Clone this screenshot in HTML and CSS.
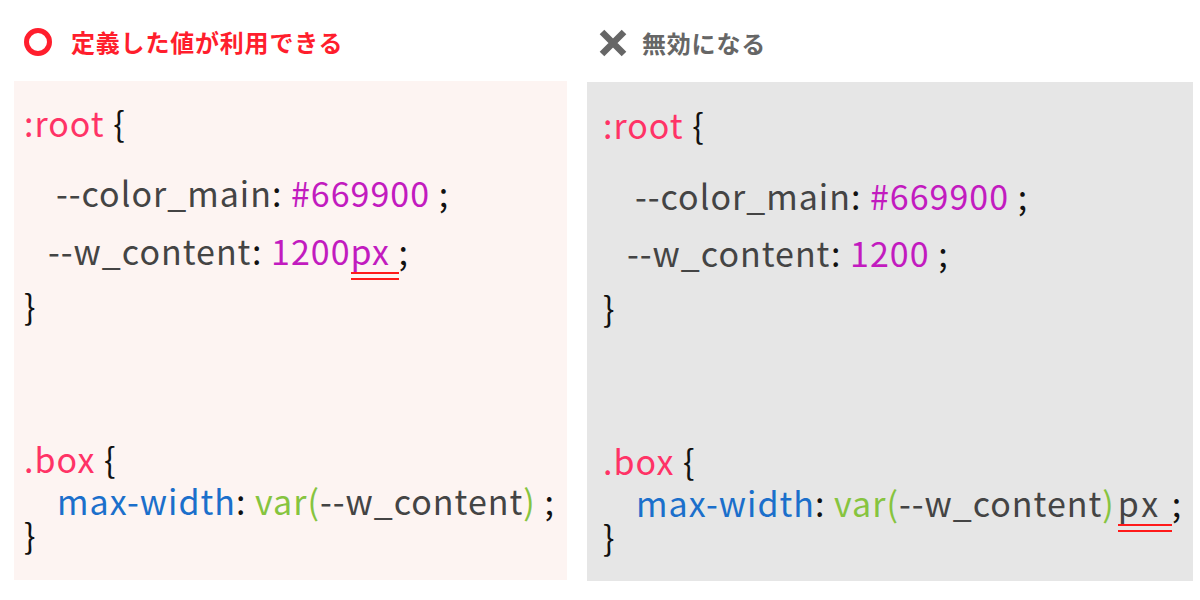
FILE: index.html
```html
<!DOCTYPE html>
<html lang="ja">
<head>
<meta charset="utf-8">
<link rel="stylesheet" href="styles.css">
</head>
<body>
<div class="page">
  <section class="col col-ok">
    <h2 class="head head-ok">
      <svg class="icon" width="30" height="30" viewBox="0 0 30 30"><circle cx="15" cy="15" r="11.5" fill="none" stroke="#ff1e2d" stroke-width="5"/></svg>
      <span>定義した値が利用できる</span>
    </h2>
    <div class="panel panel-ok">
      <div class="ln l1"><span class="sel">:root</span> {</div>
      <div class="ln l2 ind1"><span class="prop">--color_main</span>: <span class="val">#669900</span> ;</div>
      <div class="ln l3 ind2"><span class="prop">--w_content</span>: <span class="val">1200<span class="mark">px </span></span>;</div>
      <div class="ln l4">}</div>
      <div class="ln l5"><span class="sel">.box</span> {</div>
      <div class="ln l6 ind3"><span class="kw">max-width</span>: <span class="fn">var(</span><span class="prop">--w_content</span><span class="fn">)</span> ;</div>
      <div class="ln l7">}</div>
    </div>
  </section>
  <section class="col col-ng">
    <h2 class="head head-ng">
      <svg class="icon" width="30" height="30" viewBox="0 0 30 30"><path d="M4 4 L26 26 M26 4 L4 26" stroke="#666666" stroke-width="6.5" fill="none"/></svg>
      <span>無効になる</span>
    </h2>
    <div class="panel panel-ng">
      <div class="ln l1"><span class="sel">:root</span> {</div>
      <div class="ln l2 ind1"><span class="prop">--color_main</span>: <span class="val">#669900</span> ;</div>
      <div class="ln l3 ind2"><span class="prop">--w_content</span>: <span class="val">1200</span> ;</div>
      <div class="ln l4">}</div>
      <div class="ln l5"><span class="sel">.box</span> {</div>
      <div class="ln l6 ind3"><span class="kw">max-width</span>: <span class="fn">var(</span><span class="prop">--w_content</span><span class="fn">)</span><span class="prop mark mark-wide">px </span>;</div>
      <div class="ln l7">}</div>
    </div>
  </section>
</div>
</body>
</html>
```
FILE: styles.css
```css
html, body {
  margin: 0;
  padding: 0;
  background: #ffffff;
}
body {
  width: 1200px;
  height: 600px;
  overflow: hidden;
  font-family: "Noto Sans CJK JP", "Noto Sans", sans-serif;
}
.page {
  display: flex;
  gap: 20px;
  padding-left: 14px;
}
.col {
  display: flex;
  flex-direction: column;
}
.col-ok { width: 553px; }
.col-ng { width: 606px; }

.head {
  margin: 0;
  height: 81px;
  display: flex;
  align-items: center;
  font-size: 24px;
  font-weight: 700;
  letter-spacing: 0.8px;
  line-height: 1;
  box-sizing: border-box;
  padding-top: 3px;
}
.head-ok {
  color: #ff1e2d;
  gap: 18px;
  padding-left: 9px;
}
.head-ng {
  color: #666666;
  gap: 14px;
  padding-left: 11px;
  height: 82px;
}
.icon { flex: none; display: block; }

.panel {
  height: 499px;
  box-sizing: border-box;
  padding-top: 25px;
  font-size: 34px;
  letter-spacing: 1px;
  line-height: 34px;
  color: #111111;
}
.panel-ok {
  background: #fdf4f2;
  padding-left: 10px;
}
.panel-ng {
  background: #e6e6e6;
  padding-left: 16px;
  padding-top: 26px;
}
.ln { height: 34px; white-space: pre; }
.l2 { margin-top: 36px; }
.l3 { margin-top: 24px; }
.l4 { margin-top: 21px; }
.l5 { margin-top: 119px; }
.l6 { margin-top: 8px; }
.l7 { margin-top: 0; }
.panel-ng .l2 { margin-top: 37px; }
.panel-ng .l3 { margin-top: 23px; }
.ind1 { padding-left: 32px; }
.ind2 { padding-left: 24px; }
.ind3 { padding-left: 33px; }

.sel { color: #ff3366; }
.prop { color: #444444; }
.val { color: #c21bbf; }
.kw { color: #1b6fcb; }
.fn { color: #86c43f; }

.mark {
  position: relative;
}
.mark-wide {
  margin-left: 3px;
  letter-spacing: 3px;
}
.mark::after {
  content: "";
  position: absolute;
  left: 0;
  right: 0;
  bottom: -5px;
  height: 4px;
  border-top: 2px solid #ff1a1a;
  border-bottom: 2px solid #ff1a1a;
}
```
